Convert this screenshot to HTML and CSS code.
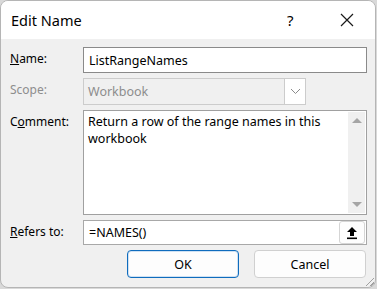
FILE: index.html
```html
<!DOCTYPE html>
<html>
<head>
  <title>Edit Name</title>
  <link rel="stylesheet" href="styles.css">
</head>
<body>
  <div class="dialog">
    <div class="titlebar">
      <span class="title">Edit Name</span>
      <span class="help">?</span>
      <span class="close">
        <svg width="14" height="14" viewBox="0 0 14 14"><path d="M1 1L13 13M13 1L1 13" stroke="#1a1a1a" stroke-width="1.2" fill="none"/></svg>
      </span>
    </div>

    <div class="body">
      <div class="row">
        <label class="label"><u>N</u>ame:</label>
        <div class="field name-field">ListRangeNames</div>
      </div>

      <div class="row">
        <label class="label disabled">Scope:</label>
        <div class="combo">
          <div class="combo-text">Workbook</div>
          <div class="combo-btn">
            <svg width="11" height="7" viewBox="0 0 11 7"><path d="M1 1L5.5 5.5L10 1" stroke="#8a8a8a" stroke-width="1" fill="none"/></svg>
          </div>
        </div>
      </div>

      <div class="row">
        <label class="label">C<u>o</u>mment:</label>
        <div class="memo">
          <div class="memo-text">Return a row of the range names in this workbook</div>
          <div class="scrollbar">
            <span class="arrow up"></span>
            <span class="arrow down"></span>
          </div>
        </div>
      </div>

      <div class="row">
        <label class="label"><u>R</u>efers to:</label>
        <div class="field refers">
          <span>=NAMES()</span>
          <span class="collapse">
            <svg width="12" height="14" viewBox="0 0 12 14"><path d="M6 1L11 6H8V10H4V6H1Z" fill="#000"/><rect x="1" y="11.5" width="10" height="1.6" fill="#000"/></svg>
          </span>
        </div>
      </div>

      <div class="buttons">
        <button class="btn default">OK</button>
        <button class="btn">Cancel</button>
      </div>
    </div>
    <div class="grip"></div>
  </div>
</body>
</html>
```

FILE: styles.css
```css
body {
  margin: 0;
  font-family: "Noto Sans", "Open Sans", sans-serif;
  font-size: 12px;
  color: #000;
  background: #d9d9d9;
}
.dialog {
  position: relative;
  width: 374px;
  height: 286px;
  border: 1px solid #b5b5b5;
  border-radius: 8px;
  background: #f0f0f0;
  overflow: hidden;
}
.titlebar {
  height: 38px;
  background: #fff;
  display: flex;
  align-items: center;
  padding-left: 10px;
}
.title {
  font-size: 14.5px;
  flex: 1;
  margin-top: -1px;
}
.help {
  font-size: 15px;
  width: 14px;
  margin-right: 39px;
}
.close {
  width: 14px;
  margin-right: 21px;
  display: flex;
}
.body {
  padding: 8px 8px 0 9px;
  display: flex;
  flex-direction: column;
  gap: 5px;
}
.row {
  display: flex;
}
.label {
  width: 73px;
  padding-top: 3px;
  flex-shrink: 0;
}
.label.disabled {
  color: #8d8d8d;
}
.field {
  flex: 1;
  height: 24px;
  border: 1px solid #7a7a7a;
  background: #fff;
  padding-left: 5px;
  display: flex;
  align-items: center;
  font-size: 12.5px;
}
.name-field {
  border-color: #8a8a8a;
}
.combo {
  width: 221px;
  height: 25px;
  border: 1px solid #cccccc;
  display: flex;
  color: #8d8d8d;
  font-size: 12.5px;
}
.combo-text {
  flex: 1;
  padding-left: 4px;
  display: flex;
  align-items: center;
}
.combo-btn {
  width: 20px;
  border-left: 1px solid #cccccc;
  background: #fff;
  display: flex;
  align-items: center;
  justify-content: center;
}
.memo {
  flex: 1;
  height: 103px;
  border: 1px solid #a0a0a0;
  background: #fff;
  display: flex;
  font-size: 12.5px;
}
.memo-text {
  flex: 1;
  padding: 2px 4px;
  line-height: 17px;
}
.scrollbar {
  width: 17px;
  margin: 1px 1px 1px 0;
  background: #f0f0f0;
  display: flex;
  flex-direction: column;
  justify-content: space-between;
  align-items: center;
  padding: 6px 0;
}
.arrow {
  width: 0;
  height: 0;
  border-left: 5px solid transparent;
  border-right: 5px solid transparent;
}
.arrow.up {
  border-bottom: 5px solid #a5a5a5;
}
.arrow.down {
  border-top: 5px solid #a5a5a5;
}
.refers {
  height: 23px;
  justify-content: space-between;
  border-color: #a8a8a8;
  padding-right: 1px;
}
.collapse {
  width: 24px;
  height: 21px;
  border: 1px solid #d5d5d5;
  border-radius: 3px;
  background: #fdfdfd;
  display: flex;
  align-items: center;
  justify-content: center;
}
.buttons {
  display: flex;
  justify-content: flex-end;
  gap: 15px;
  padding-right: 1px;
}
.btn {
  width: 112px;
  height: 28px;
  font-family: inherit;
  font-size: 12.5px;
  background: #fdfdfd;
  border: 1px solid #d0d0d0;
  border-radius: 4px;
  color: #000;
}
.btn.default {
  border: 1px solid #0f6cbd;
  box-shadow: inset 0 0 0 1px #cfe1f3;
}
.grip {
  position: absolute;
  right: 1px;
  bottom: 1px;
  width: 10px;
  height: 10px;
  background: linear-gradient(135deg, transparent 55%, #a0a0a0 55%, #a0a0a0 62%, transparent 62%, transparent 78%, #a0a0a0 78%, #a0a0a0 85%, transparent 85%);
}
```
